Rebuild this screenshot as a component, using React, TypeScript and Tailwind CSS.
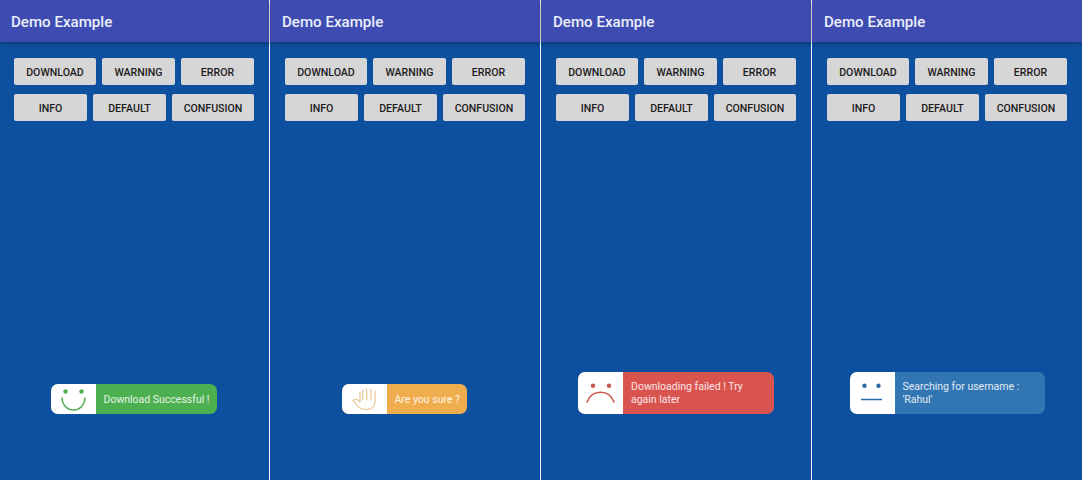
const rows = [
  [["DOWNLOAD", "w-[82px]"], ["WARNING", "w-[73px]"], ["ERROR", "w-[73px]"]],
  [["INFO", "w-[73px]"], ["DEFAULT", "w-[73px]"], ["CONFUSION", "w-[82px]"]],
];

function Face({ kind }: { kind: "smile" | "sad" | "flat" }) {
  const color = kind === "smile" ? "#4caf50" : kind === "sad" ? "#c9574f" : "#2b6aa8";
  const eyes = kind === "smile" ? [14.5, 30.5] : kind === "sad" ? [15, 31] : [14.5, 28.5];
  const eyeY = kind === "smile" ? 7.5 : 7.7;
  return (
    <svg width="45" height="30" viewBox="0 0 45 30" fill="none">
      <circle cx={eyes[0]} cy={eyeY} r="2.2" fill={color} />
      <circle cx={eyes[1]} cy={eyeY} r="2.2" fill={color} />
      {kind === "smile" && <path d="M11 14C12 30 33 30 34 14" stroke={color} strokeWidth="1.5" strokeLinecap="round" />}
      {kind === "sad" && <path d="M9 24C14 11 31 11 36 24" stroke={color} strokeWidth="1.5" strokeLinecap="round" />}
      {kind === "flat" && <path d="M11 21.500H32" stroke={color} strokeWidth="1.4" />}
    </svg>
  );
}

function Hand() {
  return (
    <svg width="45" height="30" viewBox="0 0 45 30" fill="none" stroke="#e6bd85" strokeWidth="1.1" strokeLinecap="round" strokeLinejoin="round">
      <path d="M20.700 6V16M24.700 5V16M29 5.500V16M33 7V18C33 23 29 25.500 24 25.500C17 25.500 15 21 11 16.500C13 15 15.500 15 18 18V8" />
    </svg>
  );
}

function Toast({ bg, width, icon, text, shift }: { bg: string; width: string; icon: React.ReactNode; text: string; shift: string }) {
  return (
    <div className={`self-center mb-[66px] flex items-stretch overflow-hidden rounded-[7px] ${bg} ${width} ${shift}`}>
      <div className="flex w-[45px] shrink-0 items-center justify-center bg-white">{icon}</div>
      <div className="flex min-h-[29px] items-center py-[8px] pl-[8px] pr-[6px] text-[10.5px] leading-[13px] text-white/85">{text}</div>
    </div>
  );
}

function Panel({ width, toast, titlePad, buttonPad }: { width: string; toast: React.ReactNode; titlePad: string; buttonPad: string }) {
  return (
    <div className={`flex h-full flex-col bg-[#0d50a0] ${width}`}>
      <div className={`flex h-[42px] items-center bg-[#3e4cb1] pt-[3px] text-[15.1px] font-medium text-[#eceefa] shadow-[0_2px_4px_rgba(0,0,0,0.25)] ${titlePad}`}>
        Demo Example
      </div>
      <div className={`mt-[16px] flex flex-col gap-[9px] ${buttonPad}`}>
        {rows.map((row, i) => (
          <div key={i} className="flex gap-[6px]">
            {row.map(([label, w]) => (
              <div key={label} className={`flex h-[27px] items-center justify-center rounded-[2px] bg-[#d6d6d6] pt-[2.500px] text-[10.6px] font-medium text-[#1c1c1c] ${w}`}>
                {label}
              </div>
            ))}
          </div>
        ))}
      </div>
      <div className="flex-1" />
      {toast}
    </div>
  );
}

export default function App() {
  return (
    <div className="flex h-[480px] w-[1082px] gap-px overflow-hidden bg-white font-['Roboto',sans-serif]">
      <Panel width="w-[269px]" titlePad="pl-[11px]" buttonPad="pl-[14px]" toast={<Toast shift="-translate-x-px" bg="bg-[#4caf50]" width="w-[166px]" icon={<Face kind="smile" />} text="Download Successful !" />} />
      <Panel width="w-[270px]" titlePad="pl-[12px]" buttonPad="pl-[15px]" toast={<Toast shift="-translate-x-px" bg="bg-[#f0ad4e]" width="w-[125px]" icon={<Hand />} text="Are you sure ?" />} />
      <Panel width="w-[270px]" titlePad="pl-[12px]" buttonPad="pl-[15px]" toast={<Toast shift="" bg="bg-[#d9534f]" width="w-[196px]" icon={<Face kind="sad" />} text="Downloading failed ! Try again later" />} />
      <Panel width="w-[270px]" titlePad="pl-[12px]" buttonPad="pl-[15px]" toast={<Toast shift="" bg="bg-[#3175b3]" width="w-[195px]" icon={<Face kind="flat" />} text="Searching for username : 'Rahul'" />} />
    </div>
  );
}
